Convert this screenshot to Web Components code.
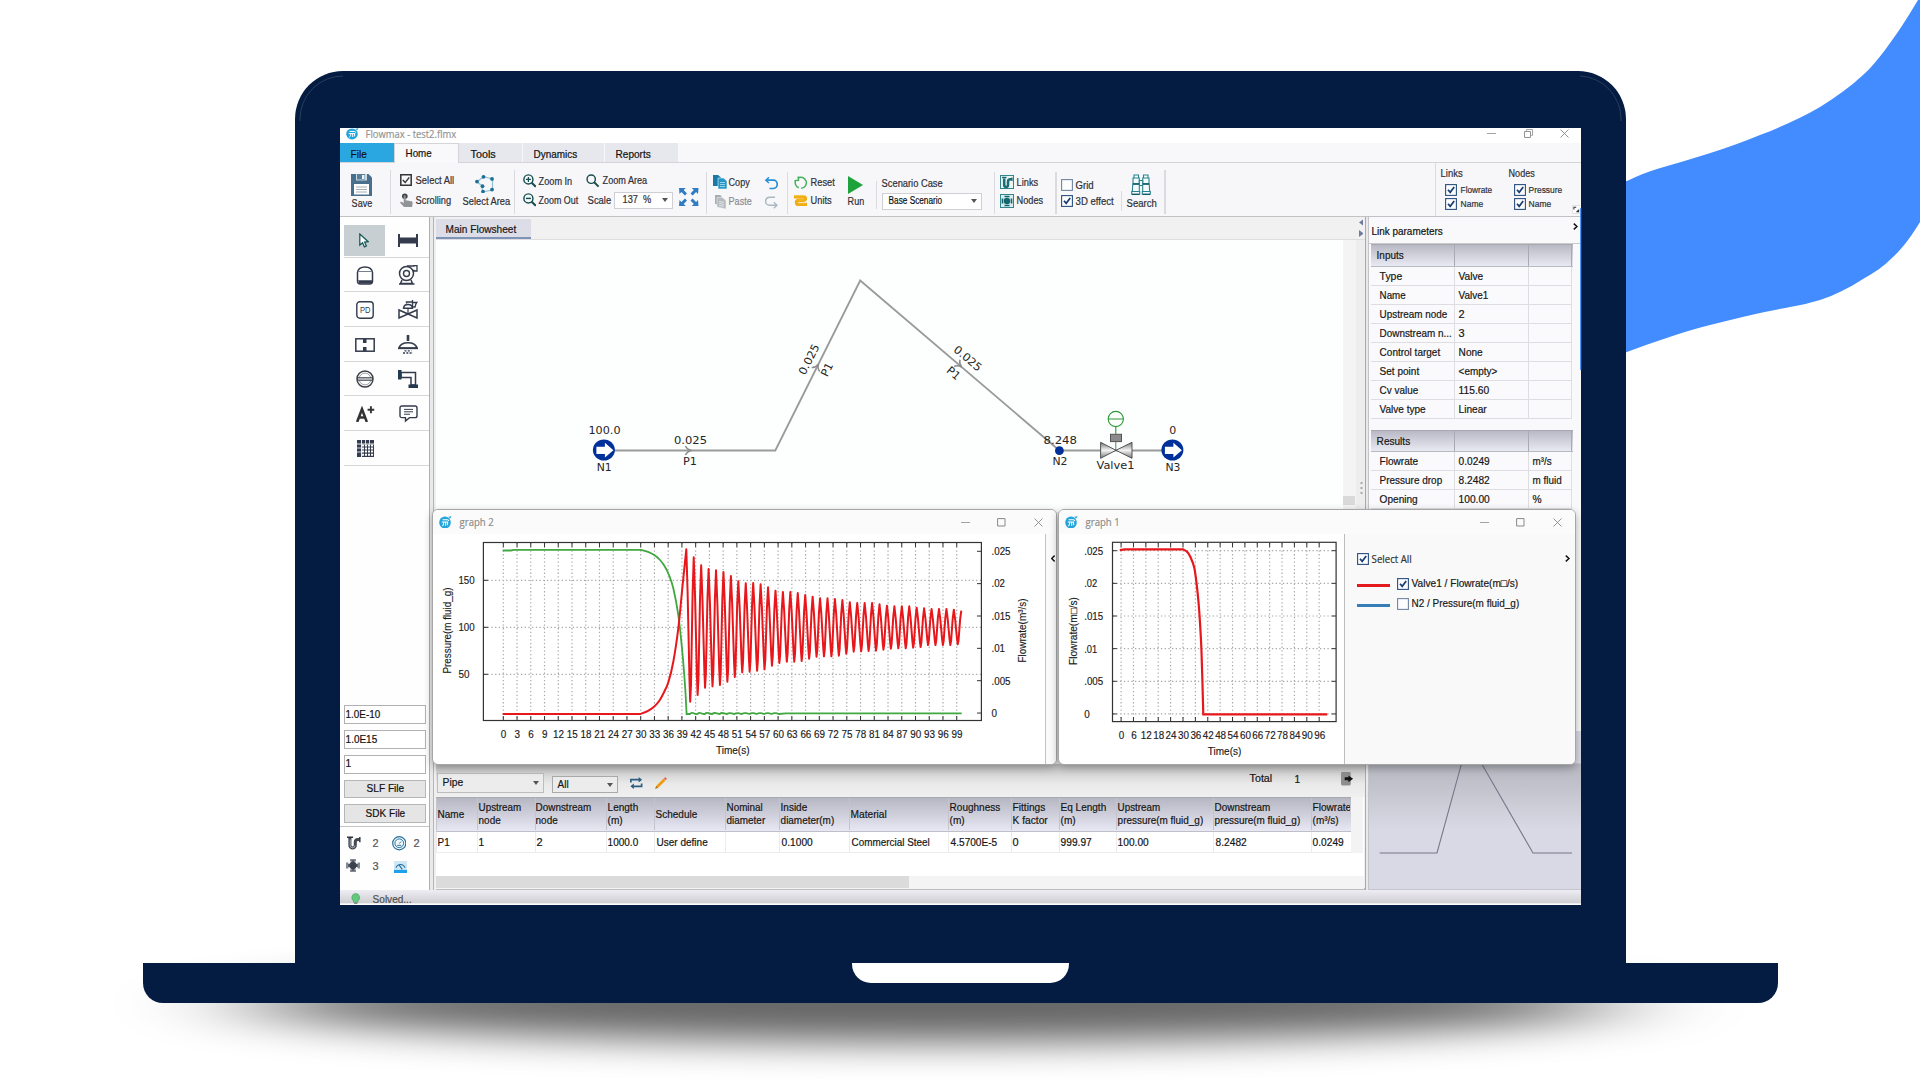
<!DOCTYPE html>
<html lang="en">
<head>
<meta charset="utf-8">
<title>Flowmax - test2.flmx</title>
<style>
html,body{margin:0;padding:0;background:#fff;overflow:hidden}
body{width:1920px;height:1080px;font-family:"Liberation Sans",Arial,sans-serif;font-size:10.4px;color:#161616}
</style>
</head>
<body>
<laptop-stage><flow-app></flow-app></laptop-stage>
<script>
/* ---------- helpers ---------- */
const T = (text, w, style = '') => `<fit-text w="${w}" style="${style}">${text.replace(/</g, '&lt;')}</fit-text>`;
const ico = (name, w, h) => `<ui-icon name="${name}" w="${w}" h="${h}"></ui-icon>`;
/* horizontal run of [x, width, html, y] items */
const hrun = (x0, y0, items) => {
  let c = x0;
  return '<div class="h">' + items.map(([x, w, html, y = y0]) => {
    const m = x - c; c = x + w;
    return `<div style="flex:none;margin-left:${m}px;margin-top:${y - y0}px;width:${w}px">${html}</div>`;
  }).join('') + '</div>';
};
/* vertical run of [y, height, html] items */
const vrun = (y0, items) => {
  let c = y0;
  return '<div class="v">' + items.map(([y, h, html]) => {
    const m = y - c; c = y + h;
    return `<div style="margin-top:${m}px;height:${h}px">${html}</div>`;
  }).join('') + '</div>';
};
const base = ':host{display:block;box-sizing:border-box}*{box-sizing:border-box}.h{display:flex;align-items:flex-start}.v{display:flex;flex-direction:column}svg{display:block}';
const define = (name, css, html) => customElements.define(name, class extends HTMLElement {
  connectedCallback() {
    if (this.shadowRoot) return;
    this.attachShadow({mode: 'open'}).innerHTML = `<style>${base}${css}</style>` + (typeof html === 'function' ? html(this) : html);
  }
});

/* text squeezed or stretched to a given width */
class FitText extends HTMLElement {
  connectedCallback() {
    if (this.shadowRoot) return;
    const w = +this.getAttribute('w');
    this.attachShadow({mode: 'open'}).innerHTML =
      `<style>:host{display:block;height:12px;line-height:12px;white-space:pre;width:${w}px}span{display:inline-block;transform-origin:0 50%;-webkit-text-stroke:.2px currentColor}</style><span><slot></slot></span>`;
    const s = this.shadowRoot.querySelector('span');
    const n = s.getBoundingClientRect().width;
    if (n && w) s.style.transform = `translateX(-.4px) scaleX(${(w + .6) / n})`;
  }
}

/* ---------- icons ---------- */
const D = '#333b4c';
const ICONS = {
  logo: ['0 0 13 12', '<circle cx="6" cy="6.2" r="5.8" fill="#22a4dc"/><path d="M12.6.3l-3.4.5 2 1.6z" fill="#22a4dc"/><path d="M3.600 3.600h4.800c1 0 1.300.4 1.300 1.200M2.800 5.800h6.400M4.800 5.800c0 2-.4 3.100-1.400 3.800M6.700 5.800v3.600M8.600 5.800v3" stroke="#fff" stroke-width="1" fill="none"/>'],
  save: ['0 0 21 22', '<path d="M0 0h17.5L21 3.5V22H0z" fill="#48708c"/><path d="M5 0h11v6.5H5z" fill="#cdd6dd"/><path d="M6 0h8v5.5H6z" fill="#57809b"/><path d="M11 1h2.5v4H11z" fill="#eef2f4"/><path d="M3 10h15v10.5H3z" fill="#fff"/><path d="M5 13h11M5 15.5h11M5 18h11" stroke="#a4adb5"/>'],
  selall: ['0 0 12 12', '<path d="M.8.8h10.4v10.4H.8z" fill="#f7f7fa" stroke="#333" stroke-width="1.5"/><path d="M2.8 6l2.4 2.5L9.3 3.4" fill="none" stroke="#333" stroke-width="1.4"/>'],
  hand: ['0 0 13 15', '<circle cx="4.8" cy="3.4" r="2.8" fill="#3e4348"/><path d="M3.7 3.3c0-1.2 2-1.2 2 0v4.2l5.6 1.1c1 .3 1.4 1 1.3 2L12 15H4.500L.3 10.300c-.5-1 .8-1.700 1.700-1l1.700 1.200z" fill="#909497"/>'],
  area: ['0 0 19 19', '<path d="M8.500 1.800L17.500 4v11.500L8 17.300 6.800 12M8.500 1.800L2 7l5.500 4.500" fill="none" stroke="#8fbfd2" stroke-width="1.200"/><g fill="#1b6f92"><circle cx="8.500" cy="1.900" r="1.900"/><circle cx="17" cy="4" r="1.900"/><circle cx="17" cy="15" r="1.900"/><circle cx="8" cy="17" r="1.900"/><circle cx="7.500" cy="11.500" r="1.900"/><circle cx="2" cy="6.800" r="1.900"/></g>'],
  zin: ['0 0 14 14', '<circle cx="5.600" cy="5.600" r="4.700" fill="#f7fafa" stroke="#174d4f" stroke-width="1.500"/><path d="M9 9l4.300 4.300" stroke="#174d4f" stroke-width="2.200"/><path d="M3 5.600h5.200M5.600 3v5.200" stroke="#174d4f" stroke-width="1.300"/>'],
  zout: ['0 0 14 14', '<circle cx="5.600" cy="5.600" r="4.700" fill="#f7fafa" stroke="#174d4f" stroke-width="1.500"/><path d="M9 9l4.300 4.300" stroke="#174d4f" stroke-width="2.200"/><path d="M3 5.600h5.200" stroke="#174d4f" stroke-width="1.500"/>'],
  zarea: ['0 0 14 14', '<circle cx="5.400" cy="5.400" r="4.300" fill="none" stroke="#174d4f" stroke-width="1.500"/><path d="M8.500 8.500l4.600 4.600" stroke="#174d4f" stroke-width="2"/>'],
  expand: ['0 0 20 18', '<g fill="#2f7cc4"><path d="M0 0h7L4.800 2l3.400 3.600L6 7.500 2.500 4.100.500 6z"/><path d="M20 0h-7l2.200 2-3.400 3.600L14 7.500l3.500-3.400 2 1.900z"/><path d="M0 18h7l-2.200-2 3.400-3.600L6 10.500l-3.500 3.400-2-1.900z"/><path d="M20 18h-7l2.200-2-3.400-3.600 2.200-1.900 3.500 3.400 2-1.900z"/></g>'],
  copy: ['0 0 14 14', '<path d="M0 0h5l3 2.500V11H0z" fill="#1878a6"/><path d="M5 3h5.500L14 6v8H5z" fill="#2596c6" stroke="#f4f6fa" stroke-width=".6"/><path d="M7 7.500h5M7 9.500h5M7 11.500h5" stroke="#a6d8ec" stroke-width=".9"/>'],
  paste: ['0 0 11 14', '<path d="M0 0h5l1.500 1v9L0 9z" fill="#a6adb2"/><path d="M2 2.500h5.500L11 5.500V14l-9-2z" fill="#b4babe" stroke="#f4f4f6" stroke-width=".5"/><path d="M4 6.500l5 .800M4 8.500l5 .800M4 10.500l5 .800" stroke="#eef0f1" stroke-width=".8"/>'],
  undo: ['0 0 13 13', '<path d="M1 3.200h7.500a3.600 4 0 010 8.300H4.500" fill="none" stroke="#2a8fd4" stroke-width="1.700"/><path d="M4 .300L.800 3.200 4 6" fill="none" stroke="#2a8fd4" stroke-width="1.500"/>'],
  redo: ['0 0 13 13', '<path d="M10 1.200H4.600a3.800 3.800 0 000 8h7" fill="none" stroke="#a9b8c0" stroke-width="1.500"/><path d="M8.800 6.200l3.200 3-3.200 3" fill="none" stroke="#a9b8c0" stroke-width="1.400"/>'],
  reset: ['0 0 14 14', '<path d="M3.800 2.200A5.800 5.800 0 117.500 12.800M5 12.200A5.800 5.800 0 011.500 5" fill="none" stroke="#42b15c" stroke-width="1.500"/><path d="M.500 4.800l4.200-.300-.200-4" fill="none" stroke="#42b15c" stroke-width="1.500"/>'],
  units: ['0 0 14 12', '<path d="M0 1.800h9.500c3.500 0 3.500 3.600 0 3.600H4.800c-3.200 0-3.200 4 0 4H14" fill="none" stroke="#f0ae12" stroke-width="3.200"/><path d="M1 .700h9M5 5h5M5 8.300h8" stroke="#fbd873" stroke-width=".7" stroke-dasharray="1 1"/>'],
  run: ['0 0 15 18', '<path d="M0 0l15 9L0 18z" fill="#1ea23c"/>'],
  links: ['0 0 14 14', '<rect x=".5" y=".5" width="13" height="13" fill="#e9f4f4" stroke="#33858c"/><path d="M4.200 3.500V10a1.900 1.900 0 003.800 0V6.800A2.500 2.500 0 0110.500 4.300H12" fill="none" stroke="#1d6c73" stroke-width="2.500"/><path d="M2 2.500h4.500M12 2.500v3.600" fill="none" stroke="#1d6c73" stroke-width="1.300"/>'],
  nodes: ['0 0 14 14', '<rect x=".5" y=".5" width="13" height="13" fill="#d8eeee" stroke="#33858c"/><circle cx="7" cy="7" r="3.200" fill="#14666d"/><path d="M4.500 1.700h5v1.600h-5zM4.500 10.700h5v1.600h-5zM1.700 4.500h1.600v5H1.700zM10.700 4.500h1.600v5h-1.600z" fill="#14666d"/>'],
  search: ['0 0 20 21', '<g fill="#f4fbfc" stroke="#28838e" stroke-width="1.1"><path d="M3 1h4.500v3H3zM12.500 1H17v3h-4.500zM2 4h6.300v6H2zM11.700 4H18v6h-6.300z"/><path d="M1.800 10h6.500v7.500h-7zM11.700 10h6.500l.500 7.500h-7zM8.300 6.500h3.400v5H8.300zM.700 17.500h8v2.800h-8zM11.300 17.500h8v2.800h-8z"/></g><path d="M2 10h6.300M11.700 10H18M1 20.300h7.500M11.500 20.300H19" stroke="#125a63" stroke-width="1.300"/>'],
  cursor: ['0 0 10 15', '<path d="M.8 1v11.500l2.700-2.300 1.900 4.100 2-.9-1.800-4 3.600-.4z" fill="#fff" stroke="#1d5b5c" stroke-width="1.300"/>'],
  pipe: ['0 0 20 13', `<path d="M0 0h2v13H0zM18 0h2v13h-2z" fill="${D}"/><path d="M2 3.500h16v6H2z" fill="${D}"/>`],
  tank: ['0 0 18 19', `<path d="M1.500 6.500C2 3 5 1 9 1s7 2 7.500 5.500V15c0 2-1 3-3 3h-9c-2 0-3-1-3-3z" fill="#fff" stroke="${D}" stroke-width="1.500"/><path d="M2 5.500h14" stroke="#7a808c" stroke-width="1"/><path d="M2 14.300h14v3.200H3.500z" fill="${D}"/>`],
  pump: ['0 0 20 20', `<circle cx="8.500" cy="8.500" r="7" fill="#fff" stroke="${D}" stroke-width="1.500"/><circle cx="8.500" cy="8.500" r="3" fill="none" stroke="${D}" stroke-width="1.400"/><path d="M9 1h7v-.500h3V6h-3v-.600h-2" fill="none" stroke="${D}" stroke-width="1.300"/><path d="M4 15l-1.500 3.500h12L13 15M1 19h15.500" fill="none" stroke="${D}" stroke-width="1.500"/>`],
  pd: ['0 0 18 18', `<rect x=".8" y=".8" width="16.400" height="16.400" rx="3" fill="#fff" stroke="${D}" stroke-width="1.400"/><text x="4" y="12.300" font-family="Liberation Sans" font-size="8.500" textLength="10.500" lengthAdjust="spacingAndGlyphs" fill="${D}">PD</text>`],
  cvalve: ['0 0 20 19', `<path d="M1 10v8l18-8v8z" fill="#fff" stroke="${D}" stroke-width="1.500"/><path d="M10 14V7" stroke="${D}" stroke-width="1.200"/><path d="M5.500 8.200c.5-5 8.500-5 9 0z" fill="#fff" stroke="${D}" stroke-width="1.400"/><path d="M8.500 3.500V2h6M14.500 0v7H17q.8-3.500 1.700-4.500h-4" fill="none" stroke="${D}" stroke-width="1.300"/>`],
  orifice: ['0 0 20 14', `<rect x=".8" y=".8" width="18.400" height="12.400" fill="#fff" stroke="${D}" stroke-width="1.500"/><path d="M8 .800h3.500V5H8zM8 9h3.500v4.200H8z" fill="${D}"/>`],
  spray: ['0 0 20 19', `<path d="M10 0v6" stroke="${D}" stroke-width="2.600"/><path d="M1 13c2-7 16-7 18 0z" fill="#fff" stroke="${D}" stroke-width="1.600"/><path d="M0 13.300h20" stroke="${D}" stroke-width="1.700"/><path d="M6.500 15.800h7M5 18h10" stroke="${D}" stroke-width="1.300" stroke-dasharray="2 1.300"/>`],
  circ: ['0 0 18 18', '<circle cx="9" cy="9" r="8" fill="#fff" stroke="#3a3f48" stroke-width="1.500"/><circle cx="9" cy="9" r="5.900" fill="none" stroke="#888" stroke-width=".8"/><path d="M1.500 7.700h15v2.600h-15z" fill="#c3c5c8" stroke="#3a3f48" stroke-width=".9"/>'],
  elbow: ['0 0 20 18', `<path d="M3 2.500h14.500V15H13V7.500H3z" fill="#fff" stroke="${D}" stroke-width="1.500"/><path d="M0 0h3.500v9.500H0zM10.500 14.500H20V18h-9.500z" fill="#23394f"/>`],
  aplus: ['0 0 20 16', `<path d="M1.200 16L6.300 3.200 11.400 16M3.500 11.500h5.800" fill="none" stroke="#333" stroke-width="2.700"/><path d="M15.700.300v7M12.200 3.800h7" stroke="#333" stroke-width="2"/>`],
  note: ['0 0 19 18', `<path d="M3 1h13c1.300 0 2 .7 2 2v8c0 1.300-.7 2-2 2h-5.500L6.500 16.500V13H3c-1.300 0-2-.7-2-2V3c0-1.300.7-2 2-2z" fill="#fff" stroke="${D}" stroke-width="1.400"/><path d="M5 4.500h9M5 7h9M5 9.500h6" stroke="${D}"/>`],
  grid: ['0 0 17 17', `<path d="M0 0h17v17H0z" fill="${D}"/><path d="M5 5.500h11.500M5 8.500h11.500M5 11.500h11.500M5 14.800h11.500" stroke="#fff" stroke-width="2.100" stroke-dasharray="2 1"/><path d="M4.500 0v17M0 4h17" stroke="#fff" stroke-width=".9"/><path d="M8.500 0v4M12.500 0v4M0 8h4M0 12h4" stroke="#fff" stroke-width=".8"/>`],
  trap: ['0 0 14 14', `<path d="M3 2v7.700a2.800 2.800 0 005.600 0V6.500A2.800 2.800 0 0111.200 3.700H13" fill="none" stroke="#454b55" stroke-width="3.200"/><path d="M3.300 3.500v6.300a2.500 2.500 0 005 0" fill="none" stroke="#c9cdd2" stroke-width=".7"/><path d="M0 1.200h6.300M13.300 1v5.400" stroke="#30343c" stroke-width="1.500" fill="none"/>`],
  gauge: ['0 0 15 15', '<circle cx="7.500" cy="7.500" r="6.800" fill="#edf6fb" stroke="#2a6f9c" stroke-width="1.200"/><circle cx="7.500" cy="7.500" r="4.500" fill="none" stroke="#2a6f9c"/><path d="M7.500 7.800l1.800-2M5.500 9.700h4" fill="none" stroke="#2a6f9c"/>'],
  cross: ['0 0 14 13', '<path d="M4 0h6v2.500H4zM4 10.500h6V13H4zM0 3.500h2.500v6H0zM11.500 3.500H14v6h-2.500z" fill="#858b94"/><path d="M2 6.500h10M7 1v11" stroke="#5b626d" stroke-width="3"/><circle cx="7" cy="6.500" r="3.700" fill="#3b424d"/>'],
  meter: ['0 0 13 12', '<path d="M0 0h13v8.500H0z" fill="#cfe7f5"/><path d="M2 6.500a4.800 4.800 0 019 0M5 3.800L8.300 8" fill="none" stroke="#1d6f9f" stroke-width="1.100"/><path d="M0 8.500h13V12H0z" fill="#1fa0ea"/>'],
  bulb: ['0 0 10 12', '<path d="M5 .500a4.300 4.300 0 012.500 7.700L7 10H3l-.5-1.800A4.300 4.300 0 015 .500z" fill="#63c77c" stroke="#3c9c57" stroke-width=".6"/><path d="M3.300 10h3.400v2H3.300z" fill="#8b8b8b"/>'],
  refresh: ['0 0 13 12', '<path d="M.900 5.500V2.700h9M12.100 6.500v2.800h-9" fill="none" stroke="#2a5d80" stroke-width="1.700"/><path d="M9 0l3.600 2.700L9 5.400zM4 6.600L.400 9.300 4 12z" fill="#2a5d80"/>'],
  pencil: ['0 0 12 12', '<path d="M0 12l1.300-3.300 1.900 2z" fill="#b06a10"/><path d="M1.300 8.800L8.600 1.600l1.900 1.800-7.300 7.300z" fill="#f09a10"/><path d="M8.800 1.400L10.300 0l1.700 1.800-1.400 1.500z" fill="#e8655c"/>'],
  exit: ['0 0 14 14', '<rect x="0" y="0" width="10.500" height="14" rx="1.500" fill="#8f8f8f"/><path d="M4 5.500h4V3.500L13 7l-5 3.500V8.500H4z" fill="#111"/>'],
  pop: ['0 0 9 9', '<path d="M.5.500h8v8h-8z" fill="#fff" stroke="#d0d0d4" stroke-width=".6"/><path d="M2 4.500V2.200h2.500M7 4.500v2.300H4.500M5.500 5.500L7 7" fill="none" stroke="#333" stroke-width="1.100"/>'],
  min: ['0 0 9 9', '<path d="M0 4.500h9" stroke="#999" stroke-width=".9"/>'],
  max: ['0 0 9 9', '<path d="M.600.600h7.400v7.400H.600z" fill="none" stroke="#888"/>'],
  restore: ['0 0 9 9', '<path d="M.500 2.500h6v6h-6z" fill="none" stroke="#888" stroke-width=".9"/><path d="M2.500 1.800V.500h6v6H7.300" fill="none" stroke="#999" stroke-width=".9"/>'],
  close: ['0 0 9 9', '<path d="M.500.500l8 8M8.500.500l-8 8" stroke="#888" stroke-width=".9"/>'],
  right: ['0 0 5 7', '<path d="M.800.600L4 3.500.800 6.400" fill="none" stroke="#111" stroke-width="1.500"/>'],
  left: ['0 0 5 7', '<path d="M4 .600L.800 3.500 4 6.400" fill="none" stroke="#111" stroke-width="1.500"/>'],
  tril: ['0 0 5 7', '<path d="M5 0v7L0 3.500z" fill="#707ba0"/>'],
  trir: ['0 0 5 7', '<path d="M0 0v7l5-3.500z" fill="#707ba0"/>']
};
define('ui-icon', 'svg{width:100%;height:100%}', e => {
  const [vb, body] = ICONS[e.getAttribute('name')];
  e.style.width = e.getAttribute('w') + 'px'; e.style.height = e.getAttribute('h') + 'px';
  return `<svg viewBox="${vb}" preserveAspectRatio="none">${body}</svg>`;
});
define('ui-check', ':host{width:12px;height:12px}', e => `<svg width="12" height="12" viewBox="0 0 12 12"><rect x=".6" y=".6" width="10.800" height="10.800" fill="#fdfdfe" stroke="${e.hasAttribute('on') ? '#2b4f80' : '#7085a4'}" stroke-width="1.100"/>${e.hasAttribute('on') ? '<path d="M3 5.700l2.200 2.600 4-5.300" fill="none" stroke="#173c74" stroke-width="1.700"/>' : ''}</svg>`);
define('ui-select', ':host{border:1px solid #cfcfd4;background:#fff;height:17px;display:flex;align-items:center;justify-content:space-between}i{width:0;height:0;border:3.500px solid transparent;border-top:4px solid #555;border-bottom:0;margin-right:4px}', '<slot></slot><i></i>');

/* ---------- laptop ---------- */
define('laptop-stage', `
:host{width:1920px;height:1080px;position:relative;overflow:hidden;background:#fff}
.art{position:absolute;inset:0}
.machine{position:relative;display:flex;flex-direction:column;padding-top:71px}
.lid{width:1331px;height:892px;margin-left:295px;border-radius:48px 48px 0 0;background:#041c41;padding:57px 45px 0 45px}
.screen{width:1241px;height:777px;overflow:hidden;background:#fff}
.base{width:1634.500px;height:40px;margin-left:143px;background:#041c41;border-radius:0 0 20px 20px;display:flex;justify-content:center}
.notch{width:217px;height:20px;background:#fff;border-radius:0 0 19px 19px}`, `
<svg class="art" width="1920" height="1080" viewBox="0 0 1920 1080">
<defs><filter id="b" x="-20%" y="-100%" width="140%" height="300%"><feGaussianBlur stdDeviation="66 18"/></filter></defs>
<path d="M1918 0C1905 22 1896 35 1885 50C1878 59 1871 68 1863 75C1850 87 1836 97 1820 107C1801 118 1781 127 1760 135C1727 149 1691 159 1657 169C1647 172 1637 176 1627 181H1570V370L1627 352C1654 342 1682 332 1710 325C1736 318 1763 312 1790 307C1801 305 1810 303 1820 300C1835 295 1849 288 1863 279C1874 273 1884 266 1893 257C1904 247 1912 235 1920 222V0z" fill="#438cff"/>
<ellipse cx="930" cy="1004" rx="690" ry="38" fill="#000" opacity=".6" filter="url(#b)"/>
</svg>
<div class="machine"><div class="lid"><div class="screen"><slot></slot></div></div><div class="base"><div class="notch"></div></div></div>
<svg class="art" width="1920" height="1080" viewBox="0 0 1920 1080"><g fill="none" stroke="#42546f" stroke-width=".6"><path d="M300 121V119A43 43 0 01343 76M1580 76A43 43 0 011621 119V121"/></g><path d="M1580.700 208V370" stroke="#438cff" stroke-width="1.200"/></svg>`);

/* ---------- title, tabs, ribbon ---------- */
define('title-bar', ':host{height:15px;background:#fff;overflow:hidden}fit-text{font-family:"Open Sans",sans-serif;color:#949494;font-size:10.500px}',
  hrun(340, 128, [[346, 13, ico('logo', 13, 11.500)], [366.300, 90, T('Flowmax - test2.flmx', 90)],
    [1487.500, 9, ico('min', 9, 9), 129], [1524, 9, ico('restore', 9, 9), 129], [1560.500, 9, ico('close', 9, 9), 129]]));

define('tab-strip', `:host{height:20px;background:#f8f8fb;border-bottom:1px solid #d5d5d8;display:flex}
div{height:19px;padding-top:5px;margin-right:1px;background:#e7e8ee;color:#111;font-size:10.500px}
.file{background:#2aa7e0;width:53.500px;padding-left:11.300px;margin:0}
.home{background:#f9f9fc;height:20px;width:65px;padding-left:11.500px;padding-top:2.500px;margin:0;border:1px solid #d5d5d8;border-bottom:0}`,
  `<div class="file">${T('File', 15.500)}</div><div class="home">${T('Home', 25.500)}</div><div style="width:63px;padding-left:12px">${T('Tools', 24.500)}</div><div style="width:81px;padding-left:11.500px">${T('Dynamics', 43)}</div><div style="width:73px;padding-left:11.500px">${T('Reports', 34.500)}</div>`);

const L = (t, w, s) => T(t, w, 'font-size:10px;' + (s || ''));
const sep = (h, w = 1) => `<div class="sep" style="height:${h}px;width:${w}px"></div>`;
const two = (y0, a, b) => vrun(y0, [a, b]);
define('ribbon-panel', ':host{height:54px;background:#f7f7fa;border-bottom:1px solid #c2c2c6;color:#303036;overflow:hidden}.sep{background:#dadadf}',
  hrun(340, 163, [
    [351, 22, two(174, [174, 22, ico('save', 21, 22)], [197.500, 12, '<div style="margin-left:1px">' + L('Save', 20) + '</div>']), 174],
    [390, 1, sep(44), 170],
    [400, 58, two(174, [174, 13, hrun(400, 174, [[400, 12, ico('selall', 12, 12)], [415.500, 38, L('Select All', 38), 175]])], [192.500, 15, hrun(400, 192.500, [[400, 13, ico('hand', 13, 14.500)], [415.500, 35, L('Scrolling', 35), 195]])]), 174],
    [463, 48, two(174.500, [174.500, 19, `<div style="margin-left:12px">${ico('area', 19, 18.500)}</div>`], [196, 12, L('Select Area', 47)]), 174.500],
    [514, 1, sep(44), 170],
    [522.500, 56, two(174, [174, 14, hrun(522.500, 174, [[522.500, 13.500, ico('zin', 13.500, 13.500)], [538.500, 33, L('Zoom In', 33), 176]])], [193, 14, hrun(522.500, 193, [[522.500, 13.500, ico('zout', 13.500, 13.500)], [538.500, 39, L('Zoom Out', 39), 195]])]), 174],
    [586, 87, two(174, [174, 14, hrun(586, 174, [[586, 13.500, ico('zarea', 13.500, 13.500)], [602.500, 44, L('Zoom Area', 44), 175]])], [191.500, 17, hrun(586, 191.500, [[587.500, 23, L('Scale', 23), 195], [613.500, 59, `<ui-select>${T('137  %', 28, 'margin-left:8px')}</ui-select>`, 191.500]])]), 174],
    [679, 20, ico('expand', 19.500, 18), 188],
    [706, 1, sep(42), 172],
    [712.500, 40, two(175, [175, 14, hrun(712.500, 175, [[712.500, 14, ico('copy', 14, 14)], [729, 20.500, L('Copy', 20.500), 177]])], [194.500, 14, hrun(712.500, 194.500, [[715, 11, ico('paste', 11, 14)], [729, 22.500, L('Paste', 22.500, 'color:#8c8c90'), 195.500]])]), 175],
    [765, 13, two(177, [177, 13, ico('undo', 13, 13)], [196, 13, ico('redo', 13, 13)]), 177],
    [787, 1, sep(42), 172],
    [793.500, 41, two(175, [175, 14, hrun(793.500, 175, [[793.500, 13.500, ico('reset', 13.500, 13.500), 176], [810.500, 23.500, L('Reset', 23.500), 177]])], [195, 12, hrun(793.500, 195, [[793.500, 13.500, ico('units', 13.500, 12)], [810.500, 20.500, L('Units', 20.500)]])]), 175],
    [847.500, 16, two(176, [176, 18, ico('run', 15, 18)], [195.500, 12, L('Run', 16)]), 176],
    [876, 1, sep(28), 181],
    [882, 100, two(178, [178, 12, L('Scenario Case', 60.500)], [192.500, 17, `<ui-select>${L('Base Scenario', 53, 'margin-left:6px;color:#111')}</ui-select>`]), 178],
    [993.500, 1.500, sep(42, 1.500), 172],
    [999.500, 44, two(175, [175, 14, hrun(999.500, 175, [[999.500, 14, ico('links', 14, 14)], [1016.500, 21, L('Links', 21), 177]])], [194, 14, hrun(999.500, 194, [[999.500, 14, ico('nodes', 14, 14)], [1016.500, 26, L('Nodes', 26), 195]])]), 175],
    [1055, 1.500, sep(42, 1.500), 172],
    [1061, 53, two(178.500, [178.500, 12, hrun(1061, 178.500, [[1061, 12, '<ui-check></ui-check>'], [1076, 17.500, L('Grid', 17.500), 179.500]])], [195, 12, hrun(1061, 195, [[1061, 12, '<ui-check on></ui-check>'], [1076, 37.500, L('3D effect', 37.500), 196]])]), 178.500],
    [1121, 1, sep(20), 191],
    [1127, 30, two(174, [174, 21, `<div style="margin-left:4px">${ico('search', 20, 21)}</div>`], [197.500, 12, L('Search', 29.500)]), 174],
    [1164, 1.500, sep(44, 1.500), 170],
    [1434.500, 1, sep(53), 163],
    [1440.500, 55, vrun(167.500, [[167.500, 12, L('Links', 21.500)], [184, 12, hrun(1440.500, 184, [[1445, 12, '<ui-check on></ui-check>'], [1460.500, 31, T('Flowrate', 31, 'font-size:9.200px'), 183.500]])], [198, 12, hrun(1440.500, 198, [[1445, 12, '<ui-check on></ui-check>'], [1460.500, 22, T('Name', 22, 'font-size:9.200px')]])]]), 167.500],
    [1509, 55, vrun(167.500, [[167.500, 12, L('Nodes', 25.500)], [184, 12, hrun(1509, 184, [[1514, 12, '<ui-check on></ui-check>'], [1529, 33, T('Pressure', 33, 'font-size:9.200px'), 183.500]])], [198, 12, hrun(1509, 198, [[1514, 12, '<ui-check on></ui-check>'], [1529, 22, T('Name', 22, 'font-size:9.200px')]])]]), 167.500],
    [1571.500, 9, ico('pop', 8.500, 9), 205]
  ]));

/* ---------- left palette ---------- */
const tool = (n, w, h, on) => `<div class="t${on ? ' on' : ''}">${n ? ico(n, w, h) : ''}</div>`;
define('tool-palette', `
:host{width:90px;height:673px;border-right:1px solid #b0b0b3;background:#fefefe;display:flex;flex-direction:column;padding-top:6px}
.r{height:34.700px;border-bottom:1px solid #d6d6d9;margin-left:3.500px;width:85.500px;display:flex;justify-content:space-between}
.t{width:41.500px;height:31px;margin-top:2px;display:flex;align-items:center;justify-content:center}.on{background:#c8cfd2}
.r+.r .t:first-child{padding-left:2px}
.f{margin:auto 0 0 3.500px;width:82.500px;display:flex;flex-direction:column;gap:6px}
.in,.bt{height:18.800px;border:1.300px solid #b1b1b3;background:#fff;padding:2.600px 0 0 1px;color:#111}
.bt{background:#e5e5e6;border-color:#b6b6b8;display:flex;justify-content:center;padding-left:1px}
.c{height:64.300px;border-top:1.500px solid #c4c4c8;margin-top:2.500px;color:#555;padding-top:9.500px;flex:none}`,
  `<div class="r">${tool('cursor', 10, 14.500, 1)}${tool('pipe', 20, 13)}</div>
<div class="r">${tool('tank', 18, 19)}${tool('pump', 20, 20)}</div>
<div class="r">${tool('pd', 18, 18)}${tool('cvalve', 20, 19)}</div>
<div class="r">${tool('orifice', 20, 14)}${tool('spray', 20, 19)}</div>
<div class="r">${tool('circ', 18, 18)}${tool('elbow', 20, 18)}</div>
<div class="r">${tool('aplus', 19, 16)}${tool('note', 19, 17.500)}</div>
<div class="r">${tool('grid', 17, 17)}${tool('')}</div>
<div class="f"><div class="in">${T('1.0E-10', 34)}</div><div class="in">${T('1.0E15', 31)}</div><div class="in">${T('1', 5)}</div><div class="bt">${T('SLF File', 37)}</div><div class="bt">${T('SDK File', 39)}</div></div>
<div class="c">${vrun(836, [[836, 15, hrun(340, 836, [[347, 13.500, ico('trap', 13.500, 13.500)], [372.500, 5.500, T('2', 5.500), 838], [391.500, 14.500, ico('gauge', 14.500, 14.500)], [414, 5.500, T('2', 5.500), 838]])], [859, 14, hrun(340, 859, [[346, 14, ico('cross', 14, 13)], [372.500, 5.500, T('3', 5.500), 861], [393.500, 13, ico('meter', 13, 12.500), 860.500]])]])}</div>`);

/* ---------- flowsheet ---------- */
const st = (x, y, w, t, extra = '') => `<text x="${x}" y="${y}" textLength="${w}" lengthAdjust="spacingAndGlyphs" ${extra}>${t}</text>`;
const node = x => `<g transform="translate(${x} 450)"><ellipse rx="11" ry="10.600" fill="#00309a"/><path d="M-7.500 -3.300H1V-7.200L9.500 .300 1 7.500V3.900H-7.500z" fill="#fff"/></g>`;
const arrow = '<path d="M-4.500 -4.500Q-3 -1 1.500 0Q-3 1-4.500 4.500" transform="';
define('flow-sheet', ':host{width:908px;height:272px;background:#fdfefe;overflow:hidden}text{font-family:"DejaVu Sans",Verdana,sans-serif;font-size:11px;fill:#262626}',
`<svg width="908" height="272" viewBox="436 240 908 272"><defs><linearGradient id="m" x1="0" y1="0" x2="0" y2="1"><stop offset="0" stop-color="#777"/><stop offset=".5" stop-color="#f4f4f4"/><stop offset="1" stop-color="#777"/></linearGradient></defs>
<path d="M611 450.500H775.300L860.200 280.500 1059.400 450.500H1166" fill="none" stroke="#9a9a9a" stroke-width="1.800"/>
<g fill="none" stroke="#8c8c8c" stroke-width="1.500">${arrow}translate(690 450.500)"/>${arrow}translate(817.700 365.500)rotate(-63.500)"/>${arrow}translate(960.500 366)rotate(40.500)"/></g>
<path d="M1100.600 442.300L1116 450.300 1100.600 458.300zM1132 442.300L1116 450.300 1132 458.300z" fill="url(#m)" stroke="#444" stroke-width=".9"/>
<path d="M1115.800 450V441.700" stroke="#4f8f50"/><rect x="1110.500" y="434.300" width="11" height="7.300" fill="#8b8b8b" stroke="#555"/><path d="M1115.800 434V426.700M1108 419H1123.500" stroke="#2c9a35" stroke-width="1.100"/><circle cx="1115.800" cy="419" r="7.600" fill="none" stroke="#2c9a35" stroke-width="1.100"/>
${node(603.900)}${node(1172.400)}<circle cx="1059.400" cy="450.700" r="4.400" fill="#00309a"/>
${st(588.500, 433.500, 32, '100.0')}${st(596.700, 471.200, 15, 'N1')}${st(674, 443.700, 33, '0.025')}${st(683, 465, 14, 'P1')}
${st(-16.500, 4, 33, '0.025', 'transform="translate(808.800 359.300)rotate(-63.500)"')}${st(-7, 4, 14, 'P1', 'transform="translate(826.700 369.500)rotate(-63.500)"')}
${st(-16.500, 4, 33, '0.025', 'transform="translate(968 358.300)rotate(40.500)"')}${st(-7, 4, 14, 'P1', 'transform="translate(953.700 373)rotate(40.500)"')}
${st(1043.500, 443.500, 33.500, '8.248')}${st(1052.500, 464.500, 15, 'N2')}${st(1096.500, 469.200, 38, 'Valve1')}${st(1169.300, 433.500, 7, '0')}${st(1165.500, 471.200, 15, 'N3')}</svg>`);

/* ---------- pipe table ---------- */
const COLS = [[437, 'Name|26', 'P1|11.500'], [478, 'Upstream|42|node|21.500', '1|5'], [535.500, 'Downstream|55|node|21.500', '2|5.500'], [607, 'Length|30|(m)|14.500', '1000.0|30'], [655.300, 'Schedule|41', 'User define|50.500'], [726, 'Nominal|35.500|diameter|38', ''], [780.300, 'Inside|26|diameter(m)|53', '0.1000|30.500'], [850.500, 'Material|35.500', 'Commercial Steel|77.500'], [949.500, 'Roughness|50|(m)|14.500', '4.5700E-5|46'], [1012, 'Fittings|32|K factor|34.500', '0|5.500'], [1060, 'Eq Length|45|(m)|14.500', '999.97|30.500'], [1117, 'Upstream|42|pressure(m fluid_g)|85', '100.00|30.500'], [1214.500, 'Downstream|55|pressure(m fluid_g)|85', '8.2482|30.500'], [1312, 'Flowrate|38|(m³/s)|25.500', '0.0249|30.500'], [1350.600]];
define('pipe-table', `
:host{height:92px;width:928px;background:#fff;display:flex;flex-direction:column}
.hd{display:flex;height:35px;width:914.500px;border-top:1.500px solid #a9a9b0;border-bottom:1.500px solid #bfbfc8;background:linear-gradient(#b7b7c3,#cfcfdb 50%,#e8e8f4)}
.hd>div{border-left:1px solid #c4c4cc;height:32px;padding:4.200px 0 0 .8px;display:flex;flex-direction:column;gap:1.300px;flex:none;overflow:hidden}
.hd .one{padding-top:11px}.rw{display:flex;height:21px;width:914.500px;border-bottom:1.500px solid #ececee}
.rw>div{border-left:1.500px solid #ececee;padding:5.300px 0 0 1.300px;flex:none;overflow:hidden}
.sb{margin-top:auto;height:13px;background:#f4f4f4}.sb div{width:473px;height:12px;background:#dbdbdb}
.row{display:flex}.vs{width:12.500px;background:#f3f3f3}`,
  `<div class="row"><div><div class="hd">${COLS.slice(0, -1).map((c, i) => { const p = c[1].split('|'); return `<div class="${p.length < 3 ? 'one' : ''}" style="width:${COLS[i + 1][0] - c[0]}px">${T(p[0], p[1])}${p[2] ? T(p[2], p[3]) : ''}</div>`; }).join('')}</div>
<div class="rw">${COLS.slice(0, -1).map((c, i) => { const p = c[2].split('|'); return `<div style="width:${COLS[i + 1][0] - c[0]}px">${p[0] ? T(p[0], p[1]) : ''}</div>`; }).join('')}</div></div><div class="vs"></div></div><div class="sb"><div></div></div>`);

define('work-area', `
:host{width:933px;height:673px;border-left:1px solid #b5b5b8;border-right:1.500px solid #a9a9ad;padding-left:2px;background:#efeff0;display:flex;flex-direction:column}
.tabs{height:23px;border-bottom:1px solid #dedee0;background:#f1f1f1;display:flex}
.tab{margin-top:2px;width:95px;height:20px;background:#dddde7;border-bottom:2px solid #7d94b8;padding:4.700px 0 0 10px}
.mid{display:flex;height:272px}.sc{width:13px;background:#f4f4f4;padding-top:256px}.sc i{display:block;width:12px;height:9px;background:#d9d9d9}
.gut{width:9px;background:#ededed;display:flex;flex-direction:column;padding:0 0 0 4px}
.tb{height:33px;margin-top:252px;background:linear-gradient(#c2c2c2,#e9e9e9 60%,#f0f0f0)}ui-select{background:#ececec;border:1.500px solid #bdbdbd}
.bot{border-bottom:2px solid #bcbcc0;height:93px}`,
  `<div class="tabs"><div class="tab">${T('Main Flowsheet', 70)}</div><div style="margin:2px 0 0 827.500px">${ico('tril', 4.500, 7)}<div style="height:4px"></div>${ico('trir', 4.500, 7)}</div></div>
<div class="mid"><flow-sheet></flow-sheet><div class="sc"><i></i></div><div class="gut"><svg width="4" height="16" style="margin-top:241px"><path d="M1.500 1v14" stroke="#aaa" stroke-width="2" stroke-dasharray="2 3"/></svg></div></div>
<div class="tb">${hrun(436, 764, [[437, 107, `<ui-select style="height:20px">${T('Pipe', 20, 'margin-left:5px')}</ui-select>`, 773], [552, 66, `<ui-select style="height:17px;border-color:#aaa">${T('All', 10.500, 'margin-left:4.500px')}</ui-select>`, 776], [630, 12.500, ico('refresh', 12.500, 12), 777], [655, 12, ico('pencil', 12, 12), 777], [1249.500, 22, L('Total', 22), 773], [1295, 5, L('1', 5), 773.500], [1341, 13, ico('exit', 13, 13.500), 772]])}</div>
<div class="bot"><pipe-table></pipe-table></div>`);

/* ---------- right panel ---------- */
define('param-grid', `
:host{width:202px;margin-left:2px;background:#fafafc}
.r,.g{display:grid;grid-template-columns:84px 74px 43px;height:19px}
.g{height:22.500px;background:linear-gradient(#b9b9c6,#cdcdd8 40%,#e9e9f3);border-top:1px solid #a9a9b2;border-bottom:1.500px solid #b9b9c2}
.g>div{border-right:1px solid #a9a9b8;padding:5px 0 0 6px}
.r>div{border-right:1px solid #dedee2;border-bottom:1.300px solid #dedee2;padding:4.200px 0 0 4px}.r>div:first-child{padding-left:9px}`,
  e => { const rows = JSON.parse(e.getAttribute('rows')); return `<div class="g"><div>${T(...rows[0])}</div><div></div><div></div></div>` + rows.slice(1).map(r => `<div class="r"><div>${T(r[0], r[1])}</div><div>${T(r[2], r[3])}</div><div>${r[4] ? T(r[4], r[5]) : ''}</div></div>`).join(''); });
const IN = [['Inputs', 26.5], ['Type', 22, 'Valve', 24], ['Name', 25.5, 'Valve1', 29], ['Upstream node', 67, '2', 5.5], ['Downstream n...', 71.5, '3', 5.5], ['Control target', 60, 'None', 23.5], ['Set point', 39, '<empty>', 38], ['Cv value', 38, '115.60', 30], ['Valve type', 45.5, 'Linear', 27.5]];
const OUT = [['Results', 33], ['Flowrate', 38, '0.0249', 30.5, 'm³/s', 18.5], ['Pressure drop', 62, '8.2482', 30.5, 'm fluid', 28.5], ['Opening', 37.5, '100.00', 30.5, '%', 8.5]];
define('side-panel', `
:host{width:213px;height:673px;border-left:1px solid #c4c4c8;background:#f9f9fb;display:flex;flex-direction:column;margin-left:2px}
.t{height:27px;border-bottom:1px solid #cacaca;display:flex;justify-content:space-between;padding:8.600px 3.500px 0 2.800px;color:#111}.t ui-icon{margin-top:-3px}
.map{margin-top:auto;height:159px;background:linear-gradient(#d9d9e5 20%,#b7b7c1 21%,#d9d9e5 62%);border-bottom:1.500px solid #c4c4cc}`,
  `<div class="t">${T('Link parameters', 70.500)}${ico('right', 5, 7)}</div>
<param-grid rows='${JSON.stringify(IN)}'></param-grid><param-grid style="margin-top:11px" rows='${JSON.stringify(OUT)}'></param-grid>
<div class="map"><svg width="212" height="158" viewBox="1369 731 212 158"><path d="M1379.700 853H1437L1468 740 1533 853H1572" fill="none" stroke="#77778a" stroke-width="1.100"/></svg></div>`);

define('status-bar', ':host{height:15px;background:linear-gradient(#ededf4,#cfcfd3 85%,#fff 93%);overflow:hidden;color:#505050}',
  hrun(340, 890, [[351, 10, ico('bulb', 9.500, 11.500), 892.500], [373, 38.500, T('Solved...', 38.500, 'height:10px;line-height:10px;font-size:10px'), 895]]));

/* ---------- graph windows ---------- */
define('graph-window', `
:host{border-radius:6px;border:1px solid #a6a6a6;background:#fff;overflow:hidden;box-shadow:0 3px 9px rgba(0,0,0,.3);height:256px;display:flex;flex-direction:column}
header{height:24px;background:#fbfbfb;display:flex;align-items:center;padding:0 13.500px 0 6px;flex:none}
header span{flex:1;margin-left:7.500px;color:#8d8d8d}header span fit-text{font-family:"Open Sans",sans-serif}header ui-icon+ui-icon{margin-left:27.500px}
.b{display:flex;flex:1}`,
  e => `<header>${ico('logo', 13, 12.500)}<span>${T(e.getAttribute('name'), 33.500)}</span>${ico('min', 9, 9)}${ico('max', 9, 9)}${ico('close', 9, 9)}</header><div class="b"><slot></slot></div>`);
const chartCss = 'text{font-family:"Liberation Sans",Arial,sans-serif;font-size:10.300px;fill:#1a1a1a;stroke:#1a1a1a;stroke-width:.15px}';
const dots = 'stroke="#a8a8a8" stroke-width="1.200" stroke-dasharray="1.300 2.400"';
const mk = d => `<path d="${d}" stroke="#333" fill="none"/>`;
const rot = (x, y, w, t) => `<text transform="translate(${x + 3.800} ${y + w / 2})rotate(-90)" textLength="${w}" lengthAdjust="spacingAndGlyphs">${t}</text>`;
/* smooth path through a list of points */
const smooth = p => {
  let d = `M${p[0]}`;
  for (let i = 0; i < p.length - 1; i++) {
    const a = p[i - 1] || p[i], b = p[i], c = p[i + 1], e = p[i + 2] || c;
    d += `C${b[0] + (c[0] - a[0]) / 6} ${b[1] + (c[1] - a[1]) / 6} ${c[0] - (e[0] - b[0]) / 6} ${c[1] - (e[1] - b[1]) / 6} ${c[0]} ${c[1]}`;
  }
  return d;
};
define('pressure-chart', ':host{width:612px;height:230px}' + chartCss, () => {
  let g = '', t = '', k = '';
  for (let i = 0; i <= 33; i++) {
    const x = 503.3 + i * 13.74; g += `M${x} 543V720`; k += `M${x} 543v4M${x} 720v-4`;
    const n = String(i * 3), w = n.length * 5.5; t += st(x - w / 2 + .3, 738.4, w, n);
  }
  for (const y of [580.3, 627.3, 674.3]) { g += `M484 ${y}H981`; k += `M484 ${y}h4`; }
  [['.025', 19], ['.02', 13.5], ['.015', 19], ['.01', 13.5], ['.005', 19], ['0', 5.5]].forEach(([s, w], i) => { const y = 551.3 + i * 32.35; k += `M977 ${y}h4`; t += st(991.5, y + 3.8, w, s); });
  t += st(458.4, 584, 16.2, '150') + st(458.4, 631.2, 16.2, '100') + st(458.4, 678, 11, '50') + st(716, 753.7, 33.5, 'Time(s)');
  const P = [132,157,181,192,196,201,213,229,235,234,238,247,257,261,261,264,270,275,280,280,282,285,292,294,294,294,298,302,304,304,304,308,310,312,312,312,314,317];
  const Q = [590,570,548,544,540,530,516,502,500,497,493,482,474,470,470,468,461,455,454,454,452,446,440,439,438,437,434,431,430,430,428,426,420,420,420,420,418];
  let d = 'M502.700 714H640.500' + smooth([[640.5, 714], [648, 710.8], [654.3, 706.5], [659.5, 700.5], [663.5, 693.3], [668.5, 681.7], [673.3, 661.7], [678.3, 628.3], [682.3, 588.3], [686.3, 549.3]]).replace('M', 'L');
  Q.forEach((q, i) => {
    const x = 686.3 + i * 7.432, a = 505 + P[i] / 3, b = 505 + q / 3, c = 505 + P[i + 1] / 3;
    d += `L${x + 1.3} ${a + (b - a) * .28} ${x + 3.2} ${b - (b - a) * .14} ${x + 3.9} ${b} ${x + 4.7} ${b - (b - c) * .12} ${x + 6.3} ${c + (b - c) * .25} ${x + 7.432} ${c}`;
  });
  let w = 'M502.700 550.500H511L514 549.800H640.500' + smooth([[640.5, 549.8], [648, 551.8], [655, 555.5], [660, 560], [664.5, 566], [669, 575], [673.3, 588.3], [678.3, 615], [682.3, 651.7], [685, 685], [686.6, 714]]).replace('M', 'L') + 'H690';
  for (let i = 0; i < 12; i++) w += `q1.700 ${-1.8 + i * .1} 3.700 -.8t3.700 .8`;
  w += 'L786 713.300H961.700';
  return `<svg width="611" height="229" viewBox="433 534 611 229"><path d="${g}" ${dots}/><rect x="483.400" y="542.500" width="498" height="178" fill="none" stroke="#333" stroke-width="1.200"/>${mk(k)}<path d="${w}" fill="none" stroke="#41a741" stroke-width="1.800"/><path d="${d}" fill="none" stroke="#e8171b" stroke-width="2" stroke-linejoin="round"/>${t}${rot(446.700, 630.500, 86, 'Pressure(m fluid_g)')}${rot(1021.700, 630.500, 64, 'Flowrate(m³/s)')}</svg>`;
});
define('flow-chart', ':host{width:286px;height:230px}' + chartCss, () => {
  let g = '', t = '', k = '';
  for (let i = 0; i <= 16; i++) {
    const x = 1121.3 + i * 12.38; g += `M${x} 543V721`; k += `M${x} 543v4M${x} 721v-4`;
    const n = String(i * 6), w = n.length * 5.5; t += st(x - w / 2 + .5, 739, w, n);
  }
  [['.025', 19], ['.02', 13], ['.015', 19], ['.01', 13], ['.005', 19], ['0', 5.5]].forEach(([s, w], i) => { const y = 550.7 + i * 32.65; g += `M1113 ${y}H1336`; k += `M1113 ${y}h4M1336 ${y}h-4`; t += st(1084.4, y + 4, w, s); });
  t += st(1208, 754.9, 33.5, 'Time(s)');
  return `<svg width="286" height="229" viewBox="1059.200 534 286 229"><path d="${g}" ${dots}/><rect x="1112.700" y="542.300" width="223.600" height="179.300" fill="none" stroke="#333" stroke-width="1.200"/>${mk(k)}<path d="M1120 550.200L1125 549.400H1183.500${smooth([[1183.5, 549.4], [1187.5, 552], [1190.5, 556.7], [1194.6, 568.3], [1197.7, 591.7], [1199.7, 615], [1201.7, 651.7], [1203.5, 714.3]]).replace('M', 'L')}H1327.500" fill="none" stroke="#e8171b" stroke-width="2.200"/>${t}${rot(1073, 631, 68, 'Flowrate(m□/s)')}</svg>`;
});
define('graph-legend', ':host{flex:1;background:#f9f9f9;border-left:1px solid #bdbdbd;color:#1a1a1a;margin-left:-1px}.k{height:3px}',
  vrun(534, [[552.500, 12, hrun(1345, 552.500, [[1357.300, 12, '<ui-check on></ui-check>'], [1372.300, 39.500, T('Select All', 39.500, 'font-family:Open Sans,sans-serif;font-size:10px;color:#333'), 552.500], [1565.300, 5, ico('right', 5, 7), 554.500]])],
    [577.500, 12, hrun(1345, 577.500, [[1357, 33, '<div class="k" style="background:#e41a1c"></div>', 583.500], [1396.500, 12, '<ui-check on></ui-check>'], [1411.500, 106, T('Valve1 / Flowrate(m□/s)', 106)]])],
    [598, 12, hrun(1345, 598, [[1357, 33, '<div class="k" style="background:#377eb8"></div>', 604], [1396.500, 12, '<ui-check></ui-check>'], [1411.500, 107, T('N2 / Pressure(m fluid_g)', 107)]])]]));
define('graph-fold', ':host{flex:1;background:#fafafa;border-left:1px solid #c2c2c2;padding:21px 0 0 4.500px}', ico('left', 4.500, 7));

/* ---------- application ---------- */
define('flow-app', `
:host{width:1241px;height:777px;position:relative;background:#e9e9ec;overflow:hidden}
main{display:flex;height:673px}main tool-palette{margin-right:3px}
graph-window{position:absolute}.g2{left:92px;top:381px;width:625px}.g1{left:718px;top:381px;width:518px}`,
  `<title-bar></title-bar><tab-strip></tab-strip><ribbon-panel></ribbon-panel>
<main><tool-palette></tool-palette><work-area></work-area><side-panel></side-panel></main><status-bar></status-bar>
<graph-window class="g2" name="graph 2"><pressure-chart></pressure-chart><graph-fold></graph-fold></graph-window>
<graph-window class="g1" name="graph 1"><flow-chart></flow-chart><graph-legend></graph-legend></graph-window>`);
customElements.define('fit-text', FitText);
</script>
</body>
</html>
